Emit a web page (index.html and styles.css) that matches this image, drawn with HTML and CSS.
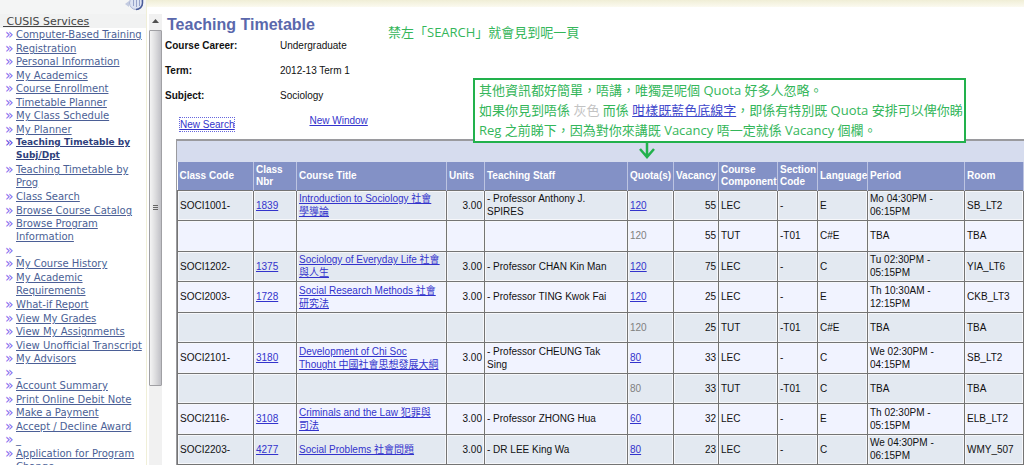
FILE: index.html
```html
<!DOCTYPE html>
<html lang="en">
<head>
<meta charset="utf-8">
<title>Teaching Timetable</title>
<link rel="stylesheet" href="styles.css">
</head>
<body>
<nav class="sidebar" aria-label="CUSIS Services">
  <div class="collapse-bar">
    <button class="collapse" type="button" aria-label="Collapse menu">
      <svg width="20" height="12" viewBox="0 0 20 12"><path d="M1 4 5 1v6z" fill="#c3cbe0"/><circle cx="12" cy="3" r="6.5" fill="#dde3f2" stroke="#aab4d4"/><path d="M12 9.5A6.5 6.5 0 0 0 18.500 3V0" fill="none" stroke="#4a5c9a" stroke-width="1.500"/><path d="M9.500 0v6M12.500 0v7M15.500 0v6" stroke="#98a4ca"/></svg>
    </button>
  </div>
  <a class="services" href="#">&nbsp;CUSIS Services</a>
  <ul class="menu">
    <li><a href="#">Computer-Based Training</a></li>
    <li><a href="#">Registration</a></li>
    <li><a href="#">Personal Information</a></li>
    <li><a href="#">My Academics</a></li>
    <li><a href="#">Course Enrollment</a></li>
    <li><a href="#">Timetable Planner</a></li>
    <li><a href="#">My Class Schedule</a></li>
    <li><a href="#">My Planner</a></li>
    <li class="current two-line"><a href="#">Teaching Timetable by<br>Subj/Dpt</a></li>
    <li class="two-line"><a href="#">Teaching Timetable by<br>Prog</a></li>
    <li><a href="#">Class Search</a></li>
    <li><a href="#">Browse Course Catalog</a></li>
    <li class="two-line"><a href="#">Browse Program<br>Information</a></li>
    <li><a class="blank" href="#">_</a></li>
    <li><a href="#">My Course History</a></li>
    <li class="two-line"><a href="#">My Academic<br>Requirements</a></li>
    <li><a href="#">What-if Report</a></li>
    <li><a href="#">View My Grades</a></li>
    <li><a href="#">View My Assignments</a></li>
    <li><a href="#">View Unofficial Transcript</a></li>
    <li><a href="#">My Advisors</a></li>
    <li><a class="blank" href="#">_</a></li>
    <li><a href="#">Account Summary</a></li>
    <li><a href="#">Print Online Debit Note</a></li>
    <li><a href="#">Make a Payment</a></li>
    <li><a href="#">Accept / Decline Award</a></li>
    <li><a class="blank" href="#">_</a></li>
    <li class="two-line"><a href="#">Application for Program<br>Change</a></li>
  </ul>
</nav>
<div class="frame">
  <div class="top-strip"></div>
  <div class="pane">
    <div class="scrollbar" aria-hidden="true">
      <div class="arrow"><svg width="7" height="4" viewBox="0 0 7 4"><path d="M0 4 3.500 0 7 4z" fill="#505050"/></svg></div>
      <div class="thumb"><span class="grip"></span></div>
    </div>
    <main class="content">
      <h1>Teaching Timetable</h1>
      <dl class="criteria">
        <dt>Course Career:</dt><dd>Undergraduate</dd>
        <dt>Term:</dt><dd>2012-13 Term 1</dd>
        <dt>Subject:</dt><dd>Sociology</dd>
      </dl>
      <div class="actions">
        <a class="focused" href="#">New Search</a>
        <a class="new-window" href="#">New Window</a>
      </div>
      <div class="results">
        <div class="band"></div>
        <table>
          <colgroup><col class="c-code"><col class="c-nbr"><col class="c-title"><col class="c-units"><col class="c-staff"><col class="c-quota"><col class="c-vac"><col class="c-comp"><col class="c-sect"><col class="c-lang"><col class="c-period"><col class="c-room"></colgroup>
          <thead><tr><th>Class Code</th><th>Class Nbr</th><th>Course Title</th><th>Units</th><th>Teaching Staff</th><th>Quota(s)</th><th>Vacancy</th><th>Course Component</th><th>Section Code</th><th>Language</th><th>Period</th><th>Room</th></tr></thead>
          <tbody>
            <tr><td>SOCI1001-</td><td><a href="#">1839</a></td><td><a href="#">Introduction to Sociology 社會<br>學導論</a></td><td class="num">3.00</td><td>- Professor Anthony J.<br>SPIRES</td><td><a href="#">120</a></td><td class="num">55</td><td>LEC</td><td>-</td><td>E</td><td>Mo 04:30PM -<br>06:15PM</td><td>SB_LT2</td></tr>
            <tr><td></td><td></td><td></td><td></td><td></td><td class="plain">120</td><td class="num">55</td><td>TUT</td><td>-T01</td><td>C#E</td><td>TBA</td><td>TBA</td></tr>
            <tr><td>SOCI1202-</td><td><a href="#">1375</a></td><td><a href="#">Sociology of Everyday Life 社會<br>與人生</a></td><td class="num">3.00</td><td>- Professor CHAN Kin Man</td><td><a href="#">120</a></td><td class="num">75</td><td>LEC</td><td>-</td><td>C</td><td>Tu 02:30PM -<br>05:15PM</td><td>YIA_LT6</td></tr>
            <tr><td>SOCI2003-</td><td><a href="#">1728</a></td><td><a href="#">Social Research Methods 社會<br>研究法</a></td><td class="num">3.00</td><td>- Professor TING Kwok Fai</td><td><a href="#">120</a></td><td class="num">25</td><td>LEC</td><td>-</td><td>E</td><td>Th 10:30AM -<br>12:15PM</td><td>CKB_LT3</td></tr>
            <tr><td></td><td></td><td></td><td></td><td></td><td class="plain">120</td><td class="num">25</td><td>TUT</td><td>-T01</td><td>C#E</td><td>TBA</td><td>TBA</td></tr>
            <tr><td>SOCI2101-</td><td><a href="#">3180</a></td><td><a href="#">Development of Chi Soc<br>Thought 中國社會思想發展大綱</a></td><td class="num">3.00</td><td>- Professor CHEUNG Tak<br>Sing</td><td><a href="#">80</a></td><td class="num">33</td><td>LEC</td><td>-</td><td>C</td><td>We 02:30PM -<br>04:15PM</td><td>SB_LT2</td></tr>
            <tr><td></td><td></td><td></td><td></td><td></td><td class="plain">80</td><td class="num">33</td><td>TUT</td><td>-T01</td><td>C</td><td>TBA</td><td>TBA</td></tr>
            <tr><td>SOCI2116-</td><td><a href="#">3108</a></td><td><a href="#">Criminals and the Law 犯罪與<br>司法</a></td><td class="num">3.00</td><td>- Professor ZHONG Hua</td><td><a href="#">60</a></td><td class="num">32</td><td>LEC</td><td>-</td><td>E</td><td>Th 02:30PM -<br>05:15PM</td><td>ELB_LT2</td></tr>
            <tr><td>SOCI2203-</td><td><a href="#">4277</a></td><td><a href="#">Social Problems 社會問題</a></td><td class="num">3.00</td><td>- DR LEE King Wa</td><td><a href="#">80</a></td><td class="num">23</td><td>LEC</td><td>-</td><td>C</td><td>We 04:30PM -<br>06:15PM</td><td>WMY_507</td></tr>
          </tbody>
        </table>
      </div>
      <p class="note hint" lang="zh-Hant">禁左「SEARCH」就會見到呢一頁</p>
      <div class="note callout" lang="zh-Hant">
        <p>其他資訊都好簡單，唔講，唯獨是呢個 Quota 好多人忽略。</p>
        <p>如果你見到唔係 <span class="grey">灰色</span> 而係 <a href="#">咁樣既藍色底線字</a>，即係有特別既 Quota 安排可以俾你睇</p>
        <p>Reg 之前睇下，因為對你來講既 Vacancy 唔一定就係 Vacancy 個欄。</p>
        <svg class="pointer" width="18" height="18" viewBox="0 0 18 18"><path d="M9 0v16M2 8l7 8 7-8" fill="none" stroke="#22b14c" stroke-width="2.500"/></svg>
      </div>
    </main>
  </div>
</div>
</body>
</html>
```

FILE: styles.css
```css
* { box-sizing: border-box; }
body {
  margin: 0;
  height: 100vh;
  overflow: hidden;
  display: grid;
  grid-template-columns: 147px 1fr;
  background: #fff;
  color: #111;
  font: 10px/13px "Liberation Sans", "Noto Sans CJK TC", sans-serif;
}
h1, p, dl, dd, ul { margin: 0; padding: 0; }

.sidebar {
  overflow: hidden;
  border-right: 1px solid #f0efd8;
  font: 10px/13px "DejaVu Sans", sans-serif;
}
.collapse-bar {
  display: flex;
  justify-content: flex-end;
  height: 14px;
  padding-right: 2px;
  background: #f4f5f5;
}
.collapse { display: block; height: 12px; padding: 0; border: 0; background: none; }
.collapse svg { display: block; }
.services {
  display: block;
  padding: 1px 3px 0;
  background: #f1f2f2;
  color: #444;
  font-size: 11px;
}
.menu { list-style: none; padding: 0 0 0 16px; }
.menu li { position: relative; white-space: nowrap; }
.menu li::before {
  content: "»";
  position: absolute;
  left: -11px;
  top: 0;
  color: #8468ee;
  font-size: 14px;
  line-height: 12px;
}
.menu li:nth-child(odd), .menu .two-line { margin-bottom: 1px; }
.menu a { color: #4b5f96; }
.menu .blank { text-decoration: none; }
.menu .current { font-size: 9px; }
.menu .current::before { color: #5a3fe0; }
.menu .current a { color: #2f3f7c; font-weight: bold; }

.frame { display: flex; flex-direction: column; min-width: 0; overflow: hidden; }
.top-strip { flex: none; height: 7px; background: linear-gradient(#f0eed6, #fbfaf0); }
.pane { display: flex; flex: 1; min-height: 0; padding: 7px 0 0 2px; }

.scrollbar { flex: none; display: flex; flex-direction: column; width: 13px; background: #f1f1f1; }
.arrow { display: flex; justify-content: center; padding: 5px 0 7px; }
.arrow svg { display: block; }
.thumb {
  display: grid;
  place-items: center;
  flex: 0 0 79%;
  border: 1px solid #a0a0a4;
  border-radius: 1px;
  background: linear-gradient(90deg, #f4f4f4, #dcdcde 50%, #c0c0c6);
}
.grip { width: 5px; height: 6px; background: repeating-linear-gradient(#666 0 1px, transparent 1px 2px); }

.content { position: relative; flex: 1; min-width: 0; padding-left: 3px; }
h1 { padding: 2px 0 0 2px; font-size: 16px; line-height: 18px; color: #5a68ac; }
.criteria { display: grid; grid-template-columns: 115px 1fr; padding-top: 5px; row-gap: 12px; }
.criteria dt { font-weight: bold; }
.actions { display: flex; align-items: flex-start; gap: 75px; padding: 12px 0 0 15px; }
.actions a, td a { color: #3333cc; }
.focused { margin-top: 4px; outline: 1px dotted #6666dd; }
.results { margin: 8px 0 0 11px; border: 2px solid #9a9a9e; border-width: 2px 0 0 1px; }
.band { height: 21px; background: #d6dcee; }
table { width: 100%; table-layout: fixed; border-collapse: collapse; }
.c-code { width: 76px; } .c-nbr { width: 43px; } .c-title { width: 150px; } .c-units { width: 38px; }
.c-staff { width: 143px; } .c-quota { width: 46px; } .c-vac { width: 45px; } .c-comp { width: 59px; }
.c-sect { width: 40px; } .c-lang { width: 50px; } .c-period { width: 97px; }
th { height: 28px; padding: 0 2px; text-align: left; font-size: 10px; line-height: 12px; color: #fff; background: #8391c6; border-right: 1px solid #bcc4e2; }
td { height: 30px; padding: 0 2px; line-height: 13px; border: 1px solid #747474; background: #e3e9f1; box-shadow: inset 0 0 0 1px #f6f7fa; }
tr:nth-child(even) td { height: 31px; background: #f1f3ff; }
.num { text-align: right; }
.plain { color: #808080; }

.note { position: absolute; color: #34b65a; font: 13px/20px "Open Sans", "Noto Sans CJK TC", sans-serif; white-space: nowrap; }
.hint { left: 226px; top: 8px; }
.callout { left: 311px; top: 64px; padding: 0 1px 1px 4px; border: 2px solid #22b14c; background: #fff; }
.callout a { color: #3f48cc; }
.grey { color: #c3c3c3; }
.pointer { position: absolute; left: 163px; top: 100%; }
```
